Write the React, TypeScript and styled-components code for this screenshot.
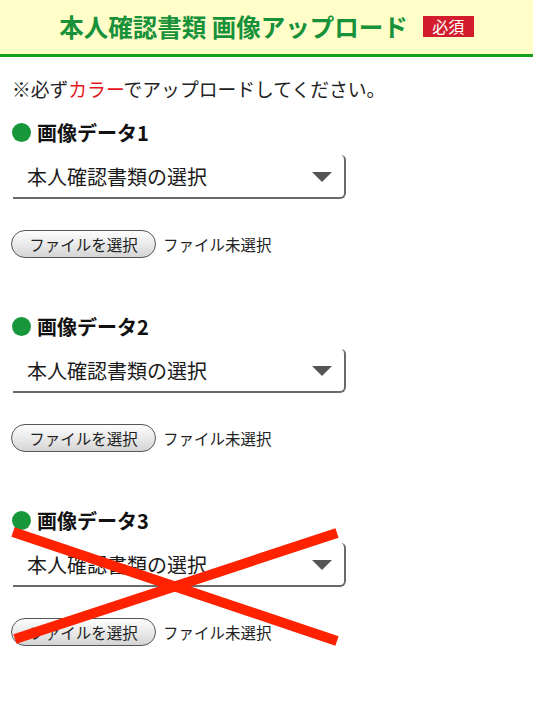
import styled, { createGlobalStyle } from "styled-components";

const GlobalStyle = createGlobalStyle`
  * {
    box-sizing: border-box;
  }
  body {
    margin: 0;
    background: #fff;
    font-family: "Noto Sans CJK JP", "Noto Sans", sans-serif;
    color: #222;
  }
`;

const sections = [
  { id: 1, label: "画像データ1", crossed: false },
  { id: 2, label: "画像データ2", crossed: false },
  { id: 3, label: "画像データ3", crossed: true },
];

const App = () => {
  return (
    <Page>
      <GlobalStyle />
      <Header>
        <Title>本人確認書類 画像アップロード</Title>
        <Badge>必須</Badge>
      </Header>
      <Content>
        <Notice>
          ※必ず<Red>カラー</Red>でアップロードしてください。
        </Notice>
        {sections.map((item, i) => {
          return (
            <Section key={item.id} $first={i === 0}>
              <Label>
                <Dot />
                {item.label}
              </Label>
              <Select>
                <span>本人確認書類の選択</span>
                <Arrow />
              </Select>
              <FileRow>
                <FileButton type="button">ファイルを選択</FileButton>
                <FileStatus>ファイル未選択</FileStatus>
              </FileRow>
              {item.crossed && (
                <Cross width="340" height="150" viewBox="0 0 340 150">
                  <line x1="1" y1="25" x2="325" y2="134" />
                  <line x1="325" y1="26" x2="3" y2="132" />
                </Cross>
              )}
            </Section>
          );
        })}
      </Content>
    </Page>
  );
};

const Page = styled.div`
  width: 533px;
  min-height: 718px;
`;

const Header = styled.header`
  height: 57px;
  background: #fffdc8;
  border-bottom: 3px solid #16a01c;
  display: flex;
  align-items: center;
  justify-content: center;
  gap: 15px;
`;

const Title = styled.h1`
  margin: 0;
  font-size: 24.5px;
  line-height: 30px;
  font-weight: 700;
  color: #17913a;
`;

const Badge = styled.span`
  width: 51px;
  height: 21px;
  line-height: 21px;
  background: #d31d2c;
  color: #fff;
  font-size: 16px;
  text-align: center;
  margin-top: -2px;
`;

const Content = styled.main`
  padding: 0 12px;
`;

const Notice = styled.p`
  margin: 20px 0 0;
  font-size: 18.8px;
  line-height: 24px;
  color: #222;
`;

const Red = styled.span`
  color: #e8161c;
`;

const Section = styled.section<{ $first: boolean }>`
  position: relative;
  margin-top: ${(p) => (p.$first ? "18px" : "55px")};
`;

const Label = styled.div`
  display: flex;
  align-items: center;
  gap: 6px;
  height: 26px;
  font-size: 20px;
  font-weight: 700;
  color: #111;
`;

const Dot = styled.span`
  width: 19px;
  height: 19px;
  border-radius: 50%;
  background: #17963a;
  margin-top: 1px;
`;

const Select = styled.div`
  margin: 10px 0 0 1px;
  width: 333px;
  height: 44px;
  display: flex;
  align-items: center;
  justify-content: space-between;
  padding: 0 12px 0 14px;
  border-right: 2px solid #6a6a6a;
  border-bottom: 2px solid #6a6a6a;
  border-radius: 0 5px 6px 0;
  font-size: 20px;
  color: #1a1a1a;
`;

const Arrow = styled.span`
  width: 0;
  height: 0;
  border-left: 10px solid transparent;
  border-right: 10px solid transparent;
  border-top: 10px solid #555;
  margin-top: 1px;
`;

const FileRow = styled.div`
  margin-top: 31px;
  display: flex;
  align-items: center;
  gap: 7px;
  margin-left: -1px;
`;

const FileButton = styled.button`
  width: 145px;
  height: 28px;
  border: 1px solid #555;
  border-radius: 14px;
  background: linear-gradient(#fdfdfd, #e6e6e6 60%, #d4d4d4);
  font-family: "Noto Sans CJK JP", sans-serif;
  font-size: 15.5px;
  color: #222;
  padding: 0;
  line-height: 26px;
`;

const FileStatus = styled.span`
  font-size: 15.5px;
  color: #222;
`;

const Cross = styled.svg`
  position: absolute;
  top: 0;
  left: 0;
  overflow: visible;
  pointer-events: none;
  line {
    stroke: #ff2200;
    stroke-width: 10;
  }
`;

export default App;
